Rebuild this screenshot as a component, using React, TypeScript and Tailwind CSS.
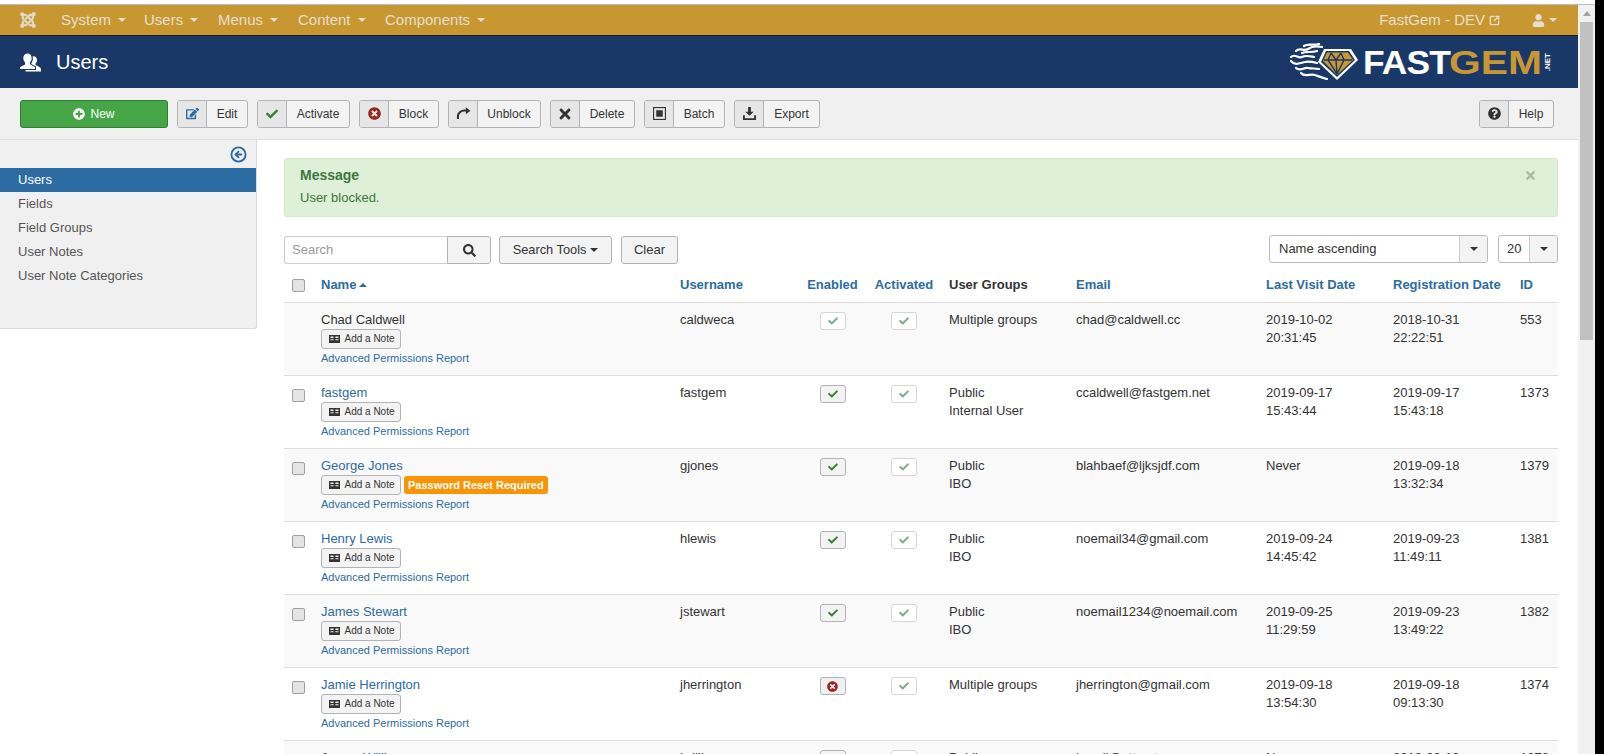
import React from 'react';
import { CircleArrowLeft, SquareArrowOutUpRight } from 'lucide-react';
import { FaCheck, FaEdit, FaJoomla, FaPlusCircle, FaQuestionCircle, FaSearch, FaTimes, FaTimesCircle, FaUser } from 'react-icons/fa';

interface UserRow {
  name: string;
  username: string;
  enabled: boolean;
  groups: string[];
  email: string;
  visit: string[];
  registered: string[];
  id: string;
  resetRequired?: boolean;
  locked?: boolean;
}

const users: UserRow[] = [
  { name: 'Chad Caldwell', username: 'caldweca', enabled: true, groups: ['Multiple groups'], email: 'chad@caldwell.cc', visit: ['2019-10-02', '20:31:45'], registered: ['2018-10-31', '22:22:51'], id: '553', locked: true },
  { name: 'fastgem', username: 'fastgem', enabled: true, groups: ['Public', 'Internal User'], email: 'ccaldwell@fastgem.net', visit: ['2019-09-17', '15:43:44'], registered: ['2019-09-17', '15:43:18'], id: '1373' },
  { name: 'George Jones', username: 'gjones', enabled: true, groups: ['Public', 'IBO'], email: 'blahbaef@ljksjdf.com', visit: ['Never'], registered: ['2019-09-18', '13:32:34'], id: '1379', resetRequired: true },
  { name: 'Henry Lewis', username: 'hlewis', enabled: true, groups: ['Public', 'IBO'], email: 'noemail34@gmail.com', visit: ['2019-09-24', '14:45:42'], registered: ['2019-09-23', '11:49:11'], id: '1381' },
  { name: 'James Stewart', username: 'jstewart', enabled: true, groups: ['Public', 'IBO'], email: 'noemail1234@noemail.com', visit: ['2019-09-25', '11:29:59'], registered: ['2019-09-23', '13:49:22'], id: '1382' },
  { name: 'Jamie Herrington', username: 'jherrington', enabled: false, groups: ['Multiple groups'], email: 'jherrington@gmail.com', visit: ['2019-09-18', '13:54:30'], registered: ['2019-09-18', '09:13:30'], id: '1374' },
  { name: 'James Williams', username: 'jwilliams', enabled: true, groups: ['Public', 'IBO'], email: 'jewell@att.net', visit: ['Never'], registered: ['2019-09-19', '10:12:40'], id: '1378' },
];

const navItems = [
  { label: 'System', width: 'w-[83px]' },
  { label: 'Users', width: 'w-[74px]' },
  { label: 'Menus', width: 'w-[80px]' },
  { label: 'Content', width: 'w-[87px]' },
  { label: 'Components', width: 'w-[110px]' },
];

const sideItems = ['Fields', 'Field Groups', 'User Notes', 'User Note Categories'];

const Caret = ({ className }: { className: string }) => (
  <span className={`inline-block w-0 h-0 border-x-[4px] border-x-transparent border-t-[4px] ${className}`} />
);

const UnblockIcon = () => (
  <svg viewBox="0 0 16 14" className="w-[15px] h-[13px]" fill="none">
    <path d="M2 13V10C2 6.4 5 3.8 9 3.8H11" stroke="#333" strokeWidth="2.2" />
    <path d="M10.5 0.3L15.5 4L10.5 7.8Z" fill="#333" />
  </svg>
);

const BatchIcon = () => (
  <svg viewBox="0 0 14 14" className="w-[13px] h-[13px]">
    <rect x="0.6" y="0.6" width="12.8" height="12.8" fill="none" stroke="#333" strokeWidth="1.2" />
    <rect x="3.5" y="3.5" width="7" height="7" fill="#333" />
  </svg>
);

const ExportIcon = () => (
  <svg viewBox="0 0 14 14" className="w-[13px] h-[13px]" fill="#333">
    <path d="M5.5 0H8.5V5H11.5L7 9.5L2.5 5H5.5Z" />
    <path d="M0 9H2V12H12V9H14V14H0Z" />
  </svg>
);

const NoteIcon = () => (
  <svg viewBox="0 0 11 8" className="w-[11px] h-[8px]" fill="#333">
    <path d="M0 0H11V8H0ZM1.5 1.5V3H4.6V1.5ZM6.4 1.5V3H9.5V1.5ZM1.5 4.2V5.2H4.6V4.2ZM6.4 4.2V5.2H9.5V4.2Z" fillRule="evenodd" />
  </svg>
);

const UsersIcon = () => (
  <svg viewBox="0 0 21 19" className="w-[21px] h-[19px]" fill="#fff">
    <path d="M7.5 0.5C10 0.5 11.7 2.5 11.7 5C11.7 6.8 11 8.2 10 9.2V11.2C11 12 13 12.7 15 14V16H0V14.6C1.5 13 3.7 12.4 5 11.5V9.3C4 8.3 3.3 6.9 3.3 5C3.3 2.5 5 0.5 7.5 0.5Z" />
    <path d="M13.6 3.2C15.6 3.2 17 4.8 17 6.9C17 8.4 16.5 9.5 15.6 10.4V12C16.6 12.7 19.5 13.5 21 15.4V18.4H5.5V17H16V13.4C14.5 12.5 12.7 11.7 11.4 10.9V9.9C12.3 8.7 12.9 7 12.9 5.2C12.9 4.5 12.8 3.8 12.6 3.3C12.9 3.2 13.2 3.2 13.6 3.2Z" />
  </svg>
);

const Logo = () => (
  <div className="flex items-center">
    <svg viewBox="0 0 68 38" className="w-[68px] h-[38px] mr-[5px]" fill="none">
      <g stroke="#fff" strokeWidth="2.2" strokeLinecap="round">
        <path d="M1 14C5 10 8 16 12 14C16 12 19 13 24 14" />
        <path d="M6 8C10 4 14 9 18 6C22 3 27 3 32 4" />
        <path d="M12 10C16 8 21 10 27 8" />
        <path d="M1 18C5 23 10 20 15 19C19 18 23 19 27 20" />
        <path d="M6 25C10 29 14 24 18 25C22 26 25 25 29 26" />
        <path d="M11 30C15 35 20 30 25 32C28 33 32 35 37 36" />
        <path d="M14 3C18 0 24 3 29 1" />
      </g>
      <path d="M34 6H61L68 17L47 37L28 19Z" fill="#fff" />
      <path d="M36 8H59L65 17L47 34L31 19Z" fill="#1a3867" />
      <path d="M37 9.5H58L63 17L47 32L33 18Z" fill="#c99731" />
      <path d="M34 17H62M41 10L38 17L47 31L54 17L51 10M41 10L46 17L51 10M46 17L47 31" stroke="#1a3867" strokeWidth="1.4" />
    </svg>
    <span className="w-[86px] origin-left scale-x-[1.04] text-[34px] leading-none font-bold tracking-[-0.8px] text-white">FAST</span>
    <span className="w-[93px] origin-left scale-x-[1.2] text-[34px] leading-none font-bold text-[#c99731]">GEM</span>
    <span className="[writing-mode:vertical-rl] rotate-180 text-[8px] leading-[9px] font-bold text-white ml-[1px]">.NET</span>
  </div>
);

const ToolButton = ({ icon, label, width }: { icon: React.ReactNode; label: string; width: string }) => (
  <button className={`flex h-[28px] ${width} rounded-[3px] border border-[#b3b3b3] bg-[#f3f3f3] text-[12px] text-[#333] overflow-hidden`}>
    <span className="flex w-[29px] h-full items-center justify-center shrink-0 bg-[#e6e6e6] border-r border-[#b3b3b3]">{icon}</span>
    <span className="flex-1 flex h-full items-center justify-center">{label}</span>
  </button>
);

const Toggle = ({ state }: { state: 'on' | 'off' | 'locked' }) => {
  if (state === 'off') {
    return (
      <span className="flex w-[26px] h-[18px] items-center justify-center rounded-[3px] border border-[#b3b3b3] bg-[#f0f0f0]">
        <FaTimesCircle className="text-[#942a25] text-[11px]" />
      </span>
    );
  }
  if (state === 'on') {
    return (
      <span className="flex w-[26px] h-[18px] items-center justify-center rounded-[3px] border border-[#b3b3b3] bg-[#f3f3f3]">
        <FaCheck className="text-[#378137] text-[10px]" />
      </span>
    );
  }
  return (
    <span className="flex w-[26px] h-[18px] items-center justify-center rounded-[3px] border border-[#d5d5d5] bg-white">
      <FaCheck className="text-[#7dab8c] text-[10px]" />
    </span>
  );
};

const Checkbox = () => <span className="block w-[13px] h-[13px] rounded-[2px] border border-[#a0a0a0] bg-[#e4e4e4]" />;

const gridCols = 'grid grid-cols-[37px_359px_118px_69px_74px_135px_190px_127px_127px_38px]';

const Row = ({ user, index }: { user: UserRow; index: number }) => (
  <div className={`${gridCols} h-[73px] border-b border-[#ddd] text-[13px] leading-[18px] text-[#333] ${index % 2 === 0 ? 'bg-[#f9f9f9]' : 'bg-white'}`}>
    <div className="pl-[8px] pt-[13px]">{!user.locked && <Checkbox />}</div>
    <div className="pt-[8px]">
      <div className={user.locked ? 'text-[#333]' : 'text-[#2d6ca2]'}>{user.name}</div>
      <div className="flex items-center h-[20px]">
        <span className="flex items-center justify-center gap-[4px] w-[80px] h-[20px] pl-[2px] rounded-[3px] border border-[#b3b3b3] bg-[#f3f3f3] text-[10px] leading-none">
          <NoteIcon />
          Add a Note
        </span>
        {user.resetRequired && (
          <span className="flex items-center h-[18px] ml-[3px] px-[4px] rounded-[3px] bg-[#f89406] text-[11px] leading-none font-bold text-white">
            Password Reset Required
          </span>
        )}
      </div>
      <div className="text-[#2d6ca2] text-[11px] leading-[18px]">Advanced Permissions Report</div>
    </div>
    <div className="pt-[8px]">{user.username}</div>
    <div className="flex justify-center pt-[9px]">
      <div><Toggle state={user.locked ? 'locked' : user.enabled ? 'on' : 'off'} /></div>
    </div>
    <div className="flex justify-center pt-[9px]">
      <div><Toggle state="locked" /></div>
    </div>
    <div className="pl-[8px] pt-[8px]">{user.groups.map((g) => <div key={g}>{g}</div>)}</div>
    <div className="pt-[8px]">{user.email}</div>
    <div className="pt-[8px]">{user.visit.map((v) => <div key={v}>{v}</div>)}</div>
    <div className="pt-[8px]">{user.registered.map((v) => <div key={v}>{v}</div>)}</div>
    <div className="pt-[8px]">{user.id}</div>
  </div>
);

const App: React.FC = () => {
  return (
    <div className="flex h-[754px] overflow-hidden bg-black font-['Liberation_Sans',Arial,sans-serif]">
      <div className="flex flex-col w-[1595px] shrink-0 bg-white">
        <div className="h-[4px] shrink-0 bg-white" />
        <div className="h-px shrink-0 bg-[#bdbdbd]" />
        <div className="flex flex-1 min-h-0">
          <div className="w-[1578px] shrink-0 flex flex-col">
            {/* Top nav */}
            <div className="flex items-center h-[31px] shrink-0 bg-[#c99731] border-b border-[#1a1a1a] text-[15px] text-[#e6dfcf]">
              <div className="flex w-[61px] justify-start pl-[19px]">
                <FaJoomla className="text-[18px] text-[#e0d9c8]" />
              </div>
              {navItems.map((item) => (
                <div key={item.label} className={`flex items-center gap-[7px] ${item.width}`}>
                  {item.label}
                  <Caret className="border-t-[#e6dfcf]" />
                </div>
              ))}
              <div className="flex items-center ml-auto mr-[21px]">
                <span>FastGem - DEV</span>
                <SquareArrowOutUpRight className="w-[11px] h-[11px] ml-[4px]" strokeWidth={3} />
                <FaUser className="text-[13px] ml-[32px]" />
                <span className="flex ml-[4px]"><Caret className="border-t-[#e6dfcf]" /></span>
              </div>
            </div>

            {/* Title bar */}
            <div className="flex items-center justify-between h-[52px] shrink-0 bg-[#1a3867] pl-[20px] pr-[26px]">
              <div className="flex items-center gap-[15px] text-white text-[20px]">
                <UsersIcon />
                <span>Users</span>
              </div>
              <Logo />
            </div>

            {/* Toolbar */}
            <div className="flex items-center gap-[9px] h-[52px] shrink-0 bg-[#f0f0f0] border-b border-[#e0e0e0] pl-[20px] pr-[24px]">
              <button className="flex items-center justify-center gap-[5px] w-[148px] h-[28px] rounded-[3px] border border-[#2f7d32] bg-[#46a546] text-[12px] text-white">
                <FaPlusCircle className="text-[12px]" />
                New
              </button>
              <ToolButton width="w-[71px]" label="Edit" icon={<FaEdit className="text-[13px] text-[#2d6ca2]" />} />
              <ToolButton width="w-[93px]" label="Activate" icon={<FaCheck className="text-[12px] text-[#378137]" />} />
              <ToolButton width="w-[80px]" label="Block" icon={<FaTimesCircle className="text-[13px] text-[#942a25]" />} />
              <ToolButton width="w-[93px]" label="Unblock" icon={<UnblockIcon />} />
              <ToolButton width="w-[85px]" label="Delete" icon={<FaTimes className="text-[16px] text-[#333]" />} />
              <ToolButton width="w-[81px]" label="Batch" icon={<BatchIcon />} />
              <ToolButton width="w-[86px]" label="Export" icon={<ExportIcon />} />
              <div className="ml-auto">
                <ToolButton width="w-[75px]" label="Help" icon={<FaQuestionCircle className="text-[13px] text-[#333]" />} />
              </div>
            </div>

            {/* Body */}
            <div className="flex flex-1 min-h-0 overflow-hidden">
              <div className="w-[257px] h-[189px] shrink-0 bg-[#f0f0f0] border-r border-b border-[#dcdcdc] rounded-br-[3px]">
                <div className="flex justify-end items-center h-[28px] pr-[9px]">
                  <CircleArrowLeft className="w-[17px] h-[17px] text-[#2a6ba6]" strokeWidth={2.6} />
                </div>
                <div className="flex items-center h-[24px] pl-[18px] bg-[#2d6ca2] text-[13px] text-white">Users</div>
                {sideItems.map((item) => (
                  <div key={item} className="flex items-center h-[24px] pl-[18px] text-[13px] text-[#555]">{item}</div>
                ))}
              </div>

              <div className="w-[1274px] shrink-0 ml-[27px] pt-[18px]">
                {/* Message */}
                <div className="relative h-[59px] pl-[15px] pt-[7px] rounded-[3px] border border-[#d6e9c6] bg-[#dff0d8] text-[#3c763d]">
                  <div className="text-[14px] leading-[18px] font-bold">Message</div>
                  <div className="text-[13px] leading-[18px] mt-[5px]">User blocked.</div>
                  <FaTimes className="absolute right-[20px] top-[10px] text-[13px] text-[#b0b8ac]" />
                </div>

                {/* Filter bar */}
                <div className="flex items-start mt-[19px] h-[28px] text-[13px] text-[#333]">
                  <div className="flex w-[207px] h-[28px]">
                    <div className="flex items-center flex-1 pl-[7px] rounded-l-[3px] border border-[#ccc] border-r-0 bg-white text-[#999]">Search</div>
                    <div className="flex items-center justify-center w-[44px] rounded-r-[3px] border border-[#b3b3b3] bg-[#f3f3f3]">
                      <FaSearch className="text-[13px] text-[#333]" />
                    </div>
                  </div>
                  <button className="flex items-center justify-center gap-[4px] w-[113px] h-[28px] ml-[8px] rounded-[3px] border border-[#b3b3b3] bg-[#f3f3f3] text-[12.8px]">
                    Search Tools
                    <Caret className="border-t-[#333]" />
                  </button>
                  <button className="w-[57px] h-[28px] ml-[9px] rounded-[3px] border border-[#b3b3b3] bg-[#f3f3f3]">Clear</button>
                  <div className="flex w-[219px] h-[28px] ml-auto -mt-[1px] rounded-[3px] border border-[#bbb] bg-white overflow-hidden">
                    <span className="flex flex-1 items-center pl-[9px]">Name ascending</span>
                    <span className="flex items-center justify-center w-[28px] border-l border-[#ccc] bg-[#f3f3f3]">
                      <Caret className="border-t-[#333]" />
                    </span>
                  </div>
                  <div className="flex w-[60px] h-[28px] ml-[10px] -mt-[1px] rounded-[3px] border border-[#bbb] bg-white overflow-hidden">
                    <span className="flex flex-1 items-center pl-[8px]">20</span>
                    <span className="flex items-center justify-center w-[28px] border-l border-[#ccc] bg-[#f3f3f3]">
                      <Caret className="border-t-[#333]" />
                    </span>
                  </div>
                </div>

                {/* Table */}
                <div className={`${gridCols} items-center h-[39px] pt-[4px] border-b border-[#ddd] text-[13px] font-bold text-[#2d6ca2]`}>
                  <div className="pl-[8px]"><Checkbox /></div>
                  <div className="flex items-center gap-[3px]">
                    Name
                    <span className="w-0 h-0 border-x-[4px] border-x-transparent border-b-[4px] border-b-[#2d6ca2]" />
                  </div>
                  <div>Username</div>
                  <div className="text-center">Enabled</div>
                  <div className="text-center">Activated</div>
                  <div className="pl-[8px] text-[#333]">User Groups</div>
                  <div>Email</div>
                  <div>Last Visit Date</div>
                  <div>Registration Date</div>
                  <div>ID</div>
                </div>
                {users.map((user, i) => (
                  <Row key={user.id} user={user} index={i} />
                ))}
              </div>
            </div>
          </div>

          {/* Scrollbar */}
          <div className="flex flex-col items-center w-[17px] shrink-0 bg-[#f1f1f1]">
            <span className="mt-[6px] w-0 h-0 border-x-[4px] border-x-transparent border-b-[5px] border-b-[#a3a3a3]" />
            <div className="w-[13px] h-[318px] mt-[6px] bg-[#c1c1c1]" />
          </div>
        </div>
      </div>
    </div>
  );
};

export default App;
